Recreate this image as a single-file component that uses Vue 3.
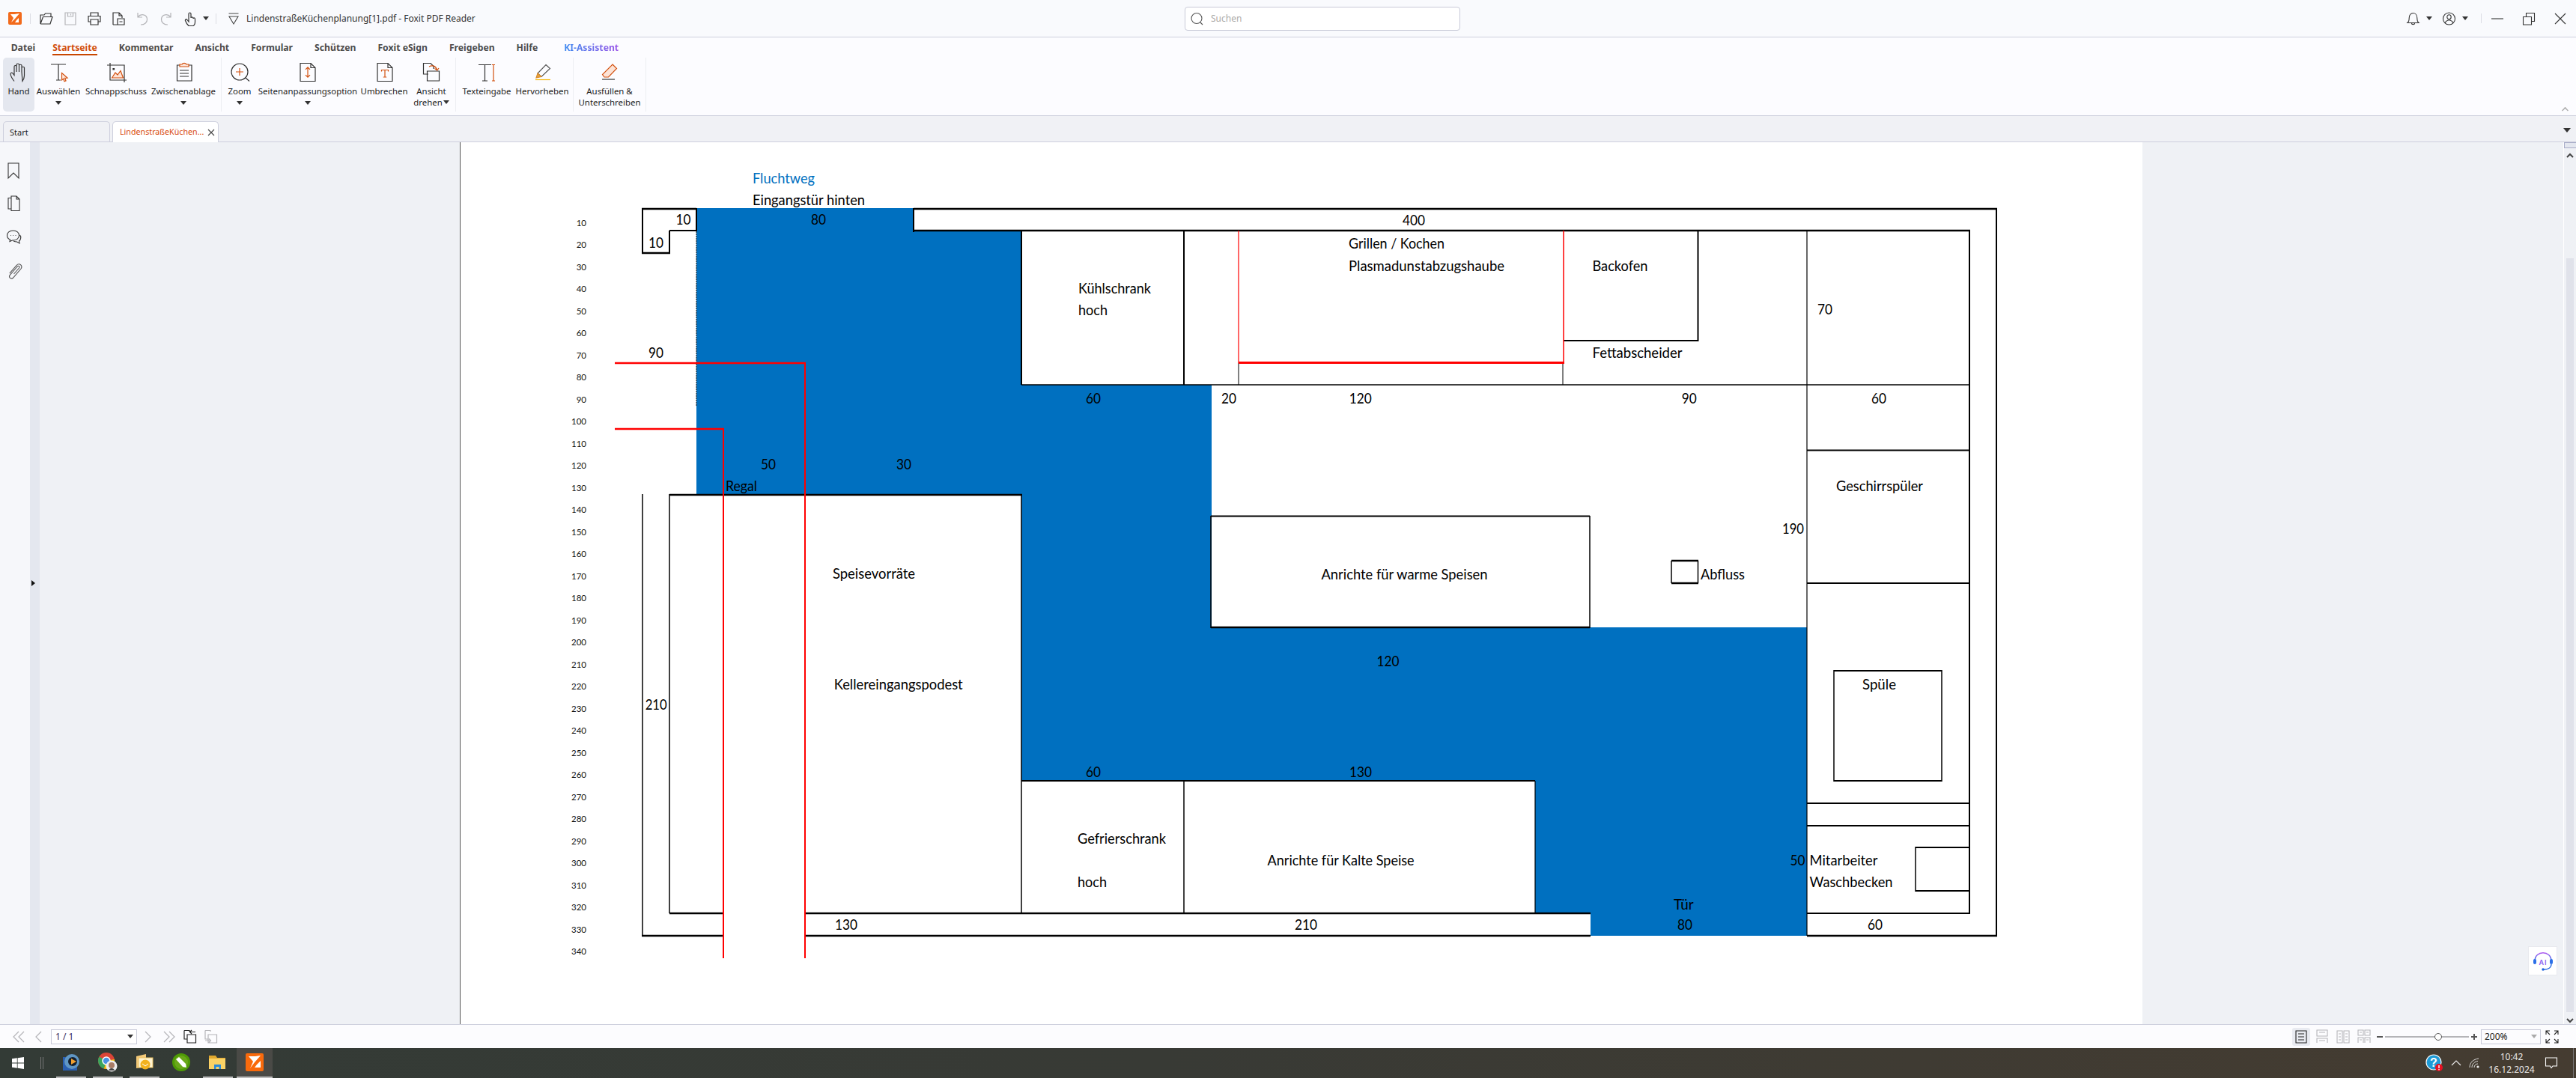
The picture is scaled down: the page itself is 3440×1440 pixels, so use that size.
<script setup>
const OR = '#d2500f'
const DK = '#333'
const GR = '#b4b4b8'
const icons = {
  hand: [['M8 25.5C6 23 3.5 19 3 16C2.8 14 5 13.5 6.5 15.5L8 17.5V6C8 4 11 4 11 6V13M11 13V3.5C11 1.5 14.5 1.5 14.5 3.5V13M14.5 13V4.5C14.5 2.8 18 2.8 18 4.5V13M18 13V7.5C18 5.8 21.5 5.8 21.5 7.5V18C21.5 21.5 20 24 19 25.5Z', DK]],
  select: [['M4 3H24M14 3V24M11 24H17', DK], ['M18.5 14.5L26 21L22.6 21.3L24 25L22 25.8L20.6 22.2L18.5 24Z', OR, '#fde8dd']],
  snap: [['M2 4H25V27M6 1V24H29', DK], ['M8.5 21L13 14L16 17L20 11.5L23.5 21Z', OR, '#fde3d6'], ['M10 8.5h1.5v1.5h-1.5z', DK, DK]],
  clip: [['M9 4H5.5V25H25V4H21M9 11H21M9 15H21M9 19H21', DK], ['M9 6V3H12C13 .8 17 .8 18 3H21V6Z', OR, '#fde3d6']],
  zoom: [['M25 13A11 11 0 1 1 3 13A11 11 0 1 1 25 13M22 21L27 25.5', DK], ['M14 8V18M9 13H19', OR]],
  fit: [['M4 1.5H18L24 7.5V25.5H4ZM18 1.5V7.5H24', DK], ['M14 7V20M11 9.8L14 6.8L17 9.8M11 17.2L14 20.2L17 17.2', OR]],
  wrap: [['M5 1.5H19L25 7.5V25.5H5ZM19 1.5V7.5H25', DK], ['M10.5 12.5V10.5H19.5V12.5M15 10.5V20M12.8 20H17.2', OR]],
  rotate: [['M10 16H3.5V1.5H13L17 5.5V9', DK], ['M8.5 12H24.5V25H8.5Z', DK], ['M11 6C15 3.5 20 5 21.5 10M18.5 8.5L21.8 11L24 8', OR]],
  text: [['M3 3.5H20M11.5 3.5V25M8 25H15', DK], ['M23 3.5V25M21 3.5H25M21 25H25', OR]],
  mark: [['M19 3.5L24.5 8.5L13 19.5L8 15Z', '#555'], ['M8 15L13 19.5L6 21Z', '#d88a2c', '#e8a33a'], ['M5 23.5H25', '#f5b400']],
  fill: [['M18 3L23.5 8.5L12.5 20L7 20L4.5 16.5Z', OR, '#fde3d6'], ['M4 23H21', DK]],
  folder: [['M2 17V5H7L8.5 3H16V7M2 17H15L18 7.5H5.5L2 17', DK]],
  save: [['M3 2H17V18H3ZM6.5 2V7H13.5V2M10.5 3.5V5.5', GR]],
  print: [['M5 6V2H15V6M5 14H2V6.5H18V14H15M5 11H15V18H5Z', DK]],
  docs: [['M3 18V2H11L15 6V9M11 2V6H15M3 18H9M9 10H18V18H9ZM11.5 14H15.5', DK]],
  undo: [['M4 2V8H10M4.3 7.5C8 3 16 4 16.5 10.5C16.8 15 13 18 8 18', GR]],
  redo: [['M16 2V8H10M15.7 7.5C12 3 4 4 3.5 10.5C3.2 15 7 18 12 18', GR]],
  touch: [['M8 9V3.5C8 1.5 11 1.5 11 3.5V9M11 9C11 7.5 14 7.5 14 9.5M14 10C14 8.5 16.5 8.5 16.5 10.5V14C16.5 17 15 19 14 19.5H8C6.5 18 4 14 3.5 12.5C3 11 5 10 6 11.5L8 14V9', DK]],
  custom: [['M3.5 3H16.5M4 7H16L10 17Z', '#444']],
  search: [['M16 9.5A7 7 0 1 1 2 9.5A7 7 0 1 1 16 9.5M14 15L17 18', '#555']],
  bell: [['M2 15.5C4 14 4.2 12 4.2 9C4.2 5 6.5 2.5 9.5 2.5C12.5 2.5 14.8 5 14.8 9C14.8 12 15 14 17 15.5ZM7.5 15.8C7.5 18.4 11.5 18.4 11.5 15.8', DK]],
  user: [['M17.5 10A8 8 0 1 1 1.5 10A8 8 0 1 1 17.5 10M12.2 7.8A2.7 3 0 1 1 6.8 7.8A2.7 3 0 1 1 12.2 7.8M4.2 15.5C5 13 7 12.5 8.5 12H10.5C12 12.5 14 13 14.8 15.5', DK]],
  min: [['M2 10H18', DK]],
  restore: [['M2.5 7.5H13.5V18H2.5ZM6.5 7.5V2.5H17.5V13.5H13.5', DK]],
  close: [['M3 3L17 17M17 3L3 17', DK]],
  bookmark: [['M3 2H17V22L10 15L3 22Z', '#333']],
  pages: [['M7 18H3V3.5H7M7 1H14L18 5V20.5H7ZM14 1V5H18', '#333']],
  comment: [['M9.5 2C4.5 2 1.5 5 1.5 8.5C1.5 11 3 13 5.5 14L5 16.5L8.5 15C14 15.3 17.5 12.5 17.5 8.5C17.5 5 14.5 2 9.5 2ZM18.5 8C20.5 10 20 14.5 17.5 16L18 19L14.5 17C13 17 11.5 16.7 10 16', '#333'], ['M6 8.5h.8M9.3 8.5h.8M12.6 8.5h.8', '#333']],
  attach: [['M10.5 15L17.5 7C19 5.2 16.8 3.2 15.2 5L5.5 16.2C2.8 19.5 7 23 9.8 19.8L20 8C23.2 4 17.6 -.4 14.2 3.4L4.8 14.2', '#555']],
  first: [['M11 3L4 10L11 17M18 3L11 10L18 17', GR]],
  prev: [['M13 3L6 10L13 17', GR]],
  next: [['M7 3L14 10L7 17', GR]],
  last: [['M2 3L9 10L2 17M9 3L16 10L9 17', GR]],
  pgA: [['M2 1.5H9V3M2 1.5V13H6M6 7H17.5V18H6ZM10 3.5H17M12 1L9.5 3.5L12 6', '#222']],
  pgB: [['M2 1.5H9V3M2 1.5V13H6M6 7H17.5V18H6ZM2 15H9M7 17.5L9.5 15L7 12.5', GR]],
  vA: [['M3 2H17V18H3ZM6 6H14M6 10H14M6 14H14', '#222']],
  vB: [['M3 1H17V9H3ZM6 4H14M3 18V12H17V18M6 15H14', GR]],
  vC: [['M2 2H9V18H2ZM11 2H18V18H11ZM4 6H7M4 10H7M4 14H7M13 6H16M13 10H16M13 14H16', GR]],
  vD: [['M2 1H9V8H2ZM11 1H18V8H11ZM2 18V11H9V18M11 18V11H18V18M4 4H7M13 4H16M4 14H7M13 14H16', GR]],
  full: [['M2 7V2H7M2 2L7 7M13 2H18V7M18 2L13 7M2 13V18H7M2 18L7 13M18 13V18H13M18 18L13 13', '#222']]
}
const menu = ['Datei', 'Startseite', 'Kommentar', 'Ansicht', 'Formular', 'Schützen', 'Foxit eSign', 'Freigeben', 'Hilfe']
const groups = [
  { items: [
    { i: 'hand', l: ['Hand'], w: 42, on: true },
    { i: 'select', l: ['Auswählen'], w: 64, c: true },
    { i: 'snap', l: ['Schnappschuss'], w: 90 },
    { i: 'clip', l: ['Zwischenablage'], w: 90, c: true }
  ] },
  { items: [
    { i: 'zoom', l: ['Zoom'], w: 48, c: true },
    { i: 'fit', l: ['Seitenanpassungsoption'], w: 134, c: true },
    { i: 'wrap', l: ['Umbrechen'], w: 70 },
    { i: 'rotate', l: ['Ansicht', 'drehen'], w: 56, ci: true }
  ] },
  { items: [
    { i: 'text', l: ['Texteingabe'], w: 82 },
    { i: 'mark', l: ['Hervorheben'], w: 66 }
  ] },
  { items: [{ i: 'fill', l: ['Ausfüllen &', 'Unterschreiben'], w: 96 }] }
]
const L = (a, b, c, d, w = 2) => ({ a, b, c, d, w })
const blackLines = [
  L(857, 279, 930, 279, 2.5), L(1220, 279, 2667, 279, 2.5), L(858, 278, 858, 339), L(857, 338, 895, 338, 2.5),
  L(894, 308, 894, 339), L(894, 308, 931, 308), L(930, 278, 930, 309), L(1220, 278, 1220, 310),
  L(1220, 308, 2631, 308, 2.5), L(2666, 278, 2666, 1251), L(2630, 308, 2630, 1220),
  L(1364, 308, 1364, 514), L(1581, 308, 1581, 514), L(1364, 514, 2630, 514, 1.6),
  L(1654, 485, 1654, 514, 1), L(2087, 485, 2087, 514, 1), L(2088, 455, 2268, 455), L(2267.5, 308, 2267.5, 456),
  L(2413, 308, 2413, 1250, 1.2), L(2413, 601.5, 2630, 601.5), L(2413, 779, 2630, 779),
  L(2413, 1073, 2631, 1073), L(2413, 1103, 2631, 1103), L(2558, 1132, 2631, 1132), L(2558, 1190, 2631, 1190), L(2558, 1131, 2558, 1191, 1.5),
  L(2413, 1220, 2631, 1220), L(2449, 896, 2593, 896), L(2449, 1043, 2593, 1043), L(2449, 895, 2449, 1044, 1.5), L(2593, 895, 2593, 1044, 1.5),
  L(858, 660, 858, 1250, 1.5), L(894, 660, 894, 1220, 1.5), L(894, 661, 1365, 661, 2.5),
  L(857, 1250, 966, 1250, 2.5), L(1075, 1250, 2124, 1250, 2.5), L(2413, 1250, 2667, 1250, 2.5),
  L(894, 1220, 966, 1220, 2.5), L(1075, 1220, 2124, 1220, 2.5),
  L(1364, 660, 1364, 1220, 1.5), L(1581, 1043, 1581, 1220, 1.5), L(1364, 1043, 2050, 1043, 2), L(2050, 1043, 2050, 1220, 1.2),
  L(1617, 689.5, 2123, 689.5), L(1617, 838, 2123, 838, 2.5), L(1617, 689, 1617, 839, 1.5), L(2123, 689, 2123, 839, 1.5),
  L(2232, 749, 2268, 749, 2.5), L(2232, 779, 2268, 779, 2.5), L(2232, 749, 2232, 779, 1.5), L(2267.5, 749, 2267.5, 779, 1.5)
]
const redLines = [
  L(821, 485, 1076, 485, 2.5), L(1075, 485, 1075, 1280), L(821, 573, 967, 573, 2.5), L(966, 573, 966, 1280),
  L(1654, 308, 1654, 485, 1.2), L(2088, 308, 2088, 485, 1.5), L(1654, 484.5, 2089, 484.5, 3)
]
const T = (x, y, t, w, c) => ({ x, y: y - 1, t, w, c })
const labels = [
  T(1005, 238, 'Fluchtweg', 83, '#0070c0'), T(1005, 267, 'Eingangstür hinten', 150),
  T(902.5, 293, '10', 20), T(1083, 293, '80', 20), T(866, 324, '10', 20),
  T(1440, 385, 'Kühlschrank', 97), T(1440, 414, 'hoch', 39), T(866, 471, '90', 20),
  T(1450, 532, '60', 20), T(1631, 532, '20', 20), T(1016, 620, '50', 20), T(1197, 620, '30', 20), T(969, 649, 'Regal', 42),
  T(1873, 294, '400', 30), T(1801, 325, 'Grillen / Kochen', 128), T(1801, 355, 'Plasmadunstabzugshaube', 208),
  T(2126.5, 355, 'Backofen', 74), T(2126.5, 471.5, 'Fettabscheider', 120), T(2427, 413.5, '70', 20),
  T(1801.7, 532, '120', 30), T(2245.7, 532, '90', 20), T(2499, 532, '60', 20), T(2452, 649, 'Geschirrspüler', 116),
  T(2380, 706, '190', 29), T(1764.5, 767, 'Anrichte für warme Speisen', 222), T(2271, 767, 'Abfluss', 59),
  T(1112, 766, 'Speisevorräte', 110), T(1113.7, 914, 'Kellereingangspodest', 172), T(861.7, 941, '210', 29),
  T(1450, 1031, '60', 20), T(1439, 1120, 'Gefrierschrank', 118), T(1439, 1178, 'hoch', 39), T(1115, 1235, '130', 30),
  T(1838.5, 883.7, '120', 30), T(2487, 914, 'Spüle', 45), T(1802, 1031, '130', 30), T(1692.6, 1149, 'Anrichte für Kalte Speise', 196),
  T(2390.6, 1149, '50', 20), T(2416.5, 1149, 'Mitarbeiter', 91), T(2416.5, 1178, 'Waschbecken', 111),
  T(2235, 1208, 'Tür', 26.5), T(1729, 1235, '210', 30), T(2240, 1235, '80', 20), T(2494, 1235, '60', 20)
]
const ruler = Array.from({ length: 34 }, (_, i) => ({ n: (i + 1) * 10, y: 297 + 29.5 * i }))
const taskItems = [
  { k: 'media', on: true }, { k: 'chrome', on: true }, { k: 'mail', on: true },
  { k: 'pen', on: false }, { k: 'files', on: true }, { k: 'foxit', on: true, active: true }
]
</script>

<template>
  <div class="app">
    <header class="titlebar">
      <div class="tb-left">
        <span class="logo-slot">
          <svg width="18" height="17" viewBox="0 0 18 17"><rect width="18" height="17" rx="2" fill="#f26a1b"/><path d="M3 3H8L15 2L9 9L4 14L7 8ZM11 11L14 8V14H9Z" fill="#fff"/></svg>
        </span>
        <span class="vsep"></span>
        <span v-for="q in ['folder','save','print','docs','undo','redo','touch']" :key="q" class="qa">
          <svg width="20" height="20" viewBox="0 0 20 20"><path v-for="(p,i) in icons[q]" :key="i" :d="p[0]" :stroke="p[1]" :fill="p[2]||'none'" stroke-width="1.2"/></svg>
        </span>
        <span class="caret qa-caret"></span>
        <span class="vsep sep2"></span>
        <span class="qa custom">
          <svg width="20" height="20" viewBox="0 0 20 20"><path v-for="(p,i) in icons.custom" :key="i" :d="p[0]" :stroke="p[1]" fill="none" stroke-width="1.1"/></svg>
        </span>
        <span class="doc-title">LindenstraßeKüchenplanung[1].pdf - Foxit PDF Reader</span>
      </div>
      <div class="search">
        <svg width="20" height="20" viewBox="0 0 20 20"><path :d="icons.search[0][0]" stroke="#555" fill="none" stroke-width="1.1"/></svg>
        <span>Suchen</span>
      </div>
      <div class="tb-right">
        <svg class="tr-icon" width="20" height="20" viewBox="0 0 20 20"><path :d="icons.bell[0][0]" stroke="#333" fill="none" stroke-width="1.1"/></svg>
        <span class="caret tr-caret c1"></span>
        <svg class="tr-icon user" width="20" height="20" viewBox="0 0 20 20"><path :d="icons.user[0][0]" stroke="#333" fill="none" stroke-width="1.1"/></svg>
        <span class="caret tr-caret c2"></span>
        <span class="vsep sep3"></span>
        <span v-for="q in ['min','restore','close']" :key="q" class="win">
          <svg width="20" height="20" viewBox="0 0 20 20"><path :d="icons[q][0][0]" stroke="#333" fill="none" stroke-width="1.1"/></svg>
        </span>
      </div>
    </header>

    <section class="ribbon">
      <nav class="menu">
        <span v-for="m in menu" :key="m" class="menu-item" :class="{ current: m === 'Startseite', first: m === 'Datei' }">{{ m }}</span>
        <span class="menu-item ai">KI-Assistent</span>
      </nav>
      <div class="tools">
        <div v-for="(g, gi) in groups" :key="gi" class="group" :class="'g' + gi">
          <div v-for="it in g.items" :key="it.i" class="tool" :class="{ on: it.on }" :style="{ width: it.w + 'px' }">
            <svg width="28" height="28" viewBox="0 0 28 28">
              <path v-for="(p,i) in icons[it.i]" :key="i" :d="p[0]" :stroke="p[1]" :fill="p[2]||'none'" stroke-width="1.2"/>
            </svg>
            <span v-for="(t, ti) in it.l" :key="t" class="tool-label">{{ t }}<i v-if="it.ci && ti === 1" class="caret inline"></i></span>
            <i v-if="it.c" class="caret below"></i>
          </div>
        </div>
        <span class="collapse"></span>
      </div>
    </section>

    <div class="tabs">
      <div class="tab">Start</div>
      <div class="tab active"><span>LindenstraßeKüchen...</span>
        <svg width="10" height="10" viewBox="0 0 10 10"><path d="M1 1L9 9M9 1L1 9" stroke="#444" fill="none" stroke-width="1.1"/></svg>
      </div>
      <i class="caret tabs-caret"></i>
    </div>

    <main class="main">
      <aside class="rail">
        <svg v-for="q in ['bookmark','pages','comment','attach']" :key="q" class="rail-icon" width="24" height="24" viewBox="0 0 24 24">
          <path v-for="(p,i) in icons[q]" :key="i" :d="p[0]" :stroke="p[1]" fill="none" stroke-width="1.1"/>
        </svg>
      </aside>
      <div class="strip"><i class="handle"></i></div>
      <div class="viewer">
        <div class="page">
          <svg class="plan" width="2246" height="1178" viewBox="615 190 2246 1178">
            <polygon points="930,278 1220,278 1220,308 1364,308 1364,514 1618,514 1618,838 2413,838 2413,1250 2124,1250 2124,1220 2050,1220 2050,1043 1364,1043 1364,660 930,660" fill="#0070c0"/>
            <line x1="930" y1="309" x2="930" y2="543" stroke="#111" stroke-width="1" stroke-dasharray="2 1"/>
            <line v-for="(l,i) in blackLines" :key="'b'+i" :x1="l.a" :y1="l.b" :x2="l.c" :y2="l.d" stroke="#000" :stroke-width="l.w"/>
            <line v-for="(l,i) in redLines" :key="'r'+i" :x1="l.a" :y1="l.b" :x2="l.c" :y2="l.d" stroke="#f00" :stroke-width="l.w"/>
            <text v-for="r in ruler" :key="r.n" :x="783" :y="r.y" class="rule" text-anchor="end" dominant-baseline="central">{{ r.n }}</text>
            <text v-for="(t,i) in labels" :key="'t'+i" :x="t.x" :y="t.y" class="lbl" :fill="t.c || '#000'" :textLength="t.w" lengthAdjust="spacingAndGlyphs" dominant-baseline="central">{{ t.t }}</text>
          </svg>
        </div>
        <div class="ai-btn">
          <svg width="28" height="28" viewBox="0 0 28 28">
            <defs><linearGradient id="aig" x1="0" y1="0" x2="0" y2="1"><stop offset="0" stop-color="#b05cf0"/><stop offset="1" stop-color="#1c63e0"/></linearGradient></defs>
            <path d="M3 14C3 -1 25 -1 25 14" stroke="url(#aig)" fill="none" stroke-width="1.4"/>
            <rect x="1" y="11" width="4" height="7" rx="2" fill="#2b6fe8"/><rect x="23" y="11" width="4" height="7" rx="2" fill="#2b6fe8"/>
            <path d="M25 18C25 23 20 25 15 25" stroke="#1c63e0" fill="none" stroke-width="1.3"/><circle cx="14" cy="25" r="1.7" fill="#1c63e0"/>
            <text x="14" y="18.5" text-anchor="middle" class="ai-txt">AI</text>
          </svg>
        </div>
      </div>
      <div class="scroller">
        <span class="sb-top"></span>
        <svg width="14" height="10" viewBox="0 0 14 10"><path d="M3 7L7 3L11 7" stroke="#444" fill="none" stroke-width="2"/></svg>
        <span class="sb-gap"></span>
        <span class="sb-thumb"></span>
        <svg width="14" height="10" viewBox="0 0 14 10"><path d="M3 3L7 7L11 3" stroke="#444" fill="none" stroke-width="2"/></svg>
      </div>
    </main>

    <footer class="status">
      <div class="st-left">
        <svg class="nav" width="20" height="20" viewBox="0 0 20 20"><path :d="icons.first[0][0]" :stroke="GR" fill="none" stroke-width="1.2"/></svg>
        <svg class="nav n2" width="20" height="20" viewBox="0 0 20 20"><path :d="icons.prev[0][0]" :stroke="GR" fill="none" stroke-width="1.2"/></svg>
        <div class="pagebox"><span>1 / 1</span><i class="caret"></i></div>
        <svg class="nav n3" width="20" height="20" viewBox="0 0 20 20"><path :d="icons.next[0][0]" :stroke="GR" fill="none" stroke-width="1.2"/></svg>
        <svg class="nav n4" width="20" height="20" viewBox="0 0 20 20"><path :d="icons.last[0][0]" :stroke="GR" fill="none" stroke-width="1.2"/></svg>
        <svg class="nav n5" width="20" height="20" viewBox="0 0 20 20"><path :d="icons.pgA[0][0]" stroke="#222" fill="none" stroke-width="1.2"/></svg>
        <svg class="nav n6" width="20" height="20" viewBox="0 0 20 20"><path :d="icons.pgB[0][0]" :stroke="GR" fill="none" stroke-width="1.2"/></svg>
      </div>
      <div class="st-right">
        <span class="viewbtn on"><svg width="20" height="20" viewBox="0 0 20 20"><path :d="icons.vA[0][0]" stroke="#222" fill="none" stroke-width="1.1"/></svg></span>
        <span v-for="q in ['vB','vC','vD']" :key="q" class="viewbtn"><svg width="20" height="20" viewBox="0 0 20 20"><path :d="icons[q][0][0]" :stroke="GR" fill="none" stroke-width="1.1"/></svg></span>
        <span class="zoom-minus"></span>
        <span class="slider"><i class="knob"></i></span>
        <span class="zoom-plus"></span>
        <div class="zoombox"><span>200%</span><i class="caret light"></i></div>
        <svg class="fullsc" width="20" height="20" viewBox="0 0 20 20"><path :d="icons.full[0][0]" stroke="#222" fill="none" stroke-width="1.1"/></svg>
      </div>
    </footer>

    <div class="taskbar">
      <span class="win-logo">
        <svg width="16" height="16" viewBox="0 0 16 16"><path d="M0 2.3L6.8 1.3V7.6H0ZM7.6 1.2L16 0V7.6H7.6ZM0 8.4H6.8V14.7L0 13.7ZM7.6 8.4H16V16L7.6 14.8Z" fill="#fff"/></svg>
      </span>
      <span class="grip"></span>
      <span v-for="t in taskItems" :key="t.k" class="task" :class="{ open: t.on, active: t.active }">
        <svg v-if="t.k==='media'" width="24" height="24" viewBox="0 0 24 24"><rect x="1" y="5" width="19" height="18" fill="#2a5fb0"/><circle cx="13" cy="11" r="10" fill="#5f96c4"/><circle cx="14" cy="11" r="6" fill="#14202e"/><path d="M12 7L19 11L12 15Z" fill="#f0a030"/></svg>
        <svg v-else-if="t.k==='chrome'" width="26" height="26" viewBox="0 0 26 26"><circle cx="11" cy="11" r="11" fill="#db4437"/><path d="M11 11L1.5 5.5A11 11 0 0 0 8 21.6Z" fill="#3ba55d"/><path d="M11 11L21.8 9A11 11 0 0 1 8 21.6Z" fill="#f4c20d"/><circle cx="11" cy="11" r="5" fill="#4a90e2" stroke="#fff" stroke-width="1.5"/><circle cx="18" cy="18" r="7.5" fill="#eee"/><circle cx="18" cy="17" r="4" fill="#a87c66"/><path d="M14 24C15 20 21 20 22 24Z" fill="#444"/></svg>
        <svg v-else-if="t.k==='mail'" width="24" height="24" viewBox="0 0 24 24"><path d="M1 4L14 1V18L1 20Z" fill="#f3c978"/><rect x="4" y="6" width="19" height="13" fill="#fff3d0" stroke="#e8c060"/><circle cx="13" cy="15" r="6.5" fill="#f3b21e"/><path d="M9 14L13 17L17 14" stroke="#fff" fill="none"/></svg>
        <svg v-else-if="t.k==='pen'" width="24" height="24" viewBox="0 0 24 24"><circle cx="12" cy="12" r="12" fill="#4e9a06"/><circle cx="12" cy="12" r="9" fill="#6aa81a"/><path d="M5 8L9 5L18 14L19 19L14 18Z" fill="#fff"/></svg>
        <svg v-else-if="t.k==='files'" width="24" height="24" viewBox="0 0 24 24"><path d="M0 3H9L11 6H22V9H0Z" fill="#e0a82e"/><rect y="7" width="22" height="14" fill="#fbd265"/><path d="M7 21V15H16V21H13.5V18H9.5V21Z" fill="#2a8ad8"/></svg>
        <svg v-else width="24" height="24" viewBox="0 0 24 24"><rect width="24" height="24" rx="2" fill="#f96a0c"/><path d="M4 4H13L20 3L12 12L6 20L10 11ZM15 15L20 10V19H12Z" fill="#fff"/></svg>
      </span>
      <span class="tray-space"></span>
      <svg class="tray help" width="24" height="24" viewBox="0 0 24 24"><circle cx="11" cy="11" r="10" fill="#1d9ad6" stroke="#fff" stroke-width="1.2"/><text x="11" y="17" text-anchor="middle" class="q">?</text><circle cx="18" cy="18" r="5" fill="#e81123"/><rect x="17.3" y="15" width="1.4" height="4" fill="#fff"/><rect x="17.3" y="20" width="1.4" height="1.4" fill="#fff"/></svg>
      <svg class="tray chev" width="16" height="16" viewBox="0 0 16 16"><path d="M2 11L8 5L14 11" stroke="#eee" fill="none" stroke-width="1.1"/></svg>
      <svg class="tray wifi" width="16" height="16" viewBox="0 0 16 16"><path d="M1 14C1 7 6 3 13 2M4 14C4 9 8 6 12 5.5M7 14C7 11 9.5 9 12 9" stroke="#ddd" fill="none"/><circle cx="12" cy="13" r="1.6" fill="#eee"/></svg>
      <div class="clock"><span>10:42</span><span>16.12.2024</span></div>
      <svg class="tray note" width="18" height="18" viewBox="0 0 18 18"><path d="M1.5 2H16.5V13H11L9 15.5L7.5 13H1.5Z" stroke="#fff" fill="none" stroke-width="1.1"/></svg>
      <span class="desk"></span>
    </div>
  </div>
</template>

<style scoped>
.app { width: 3440px; height: 1440px; display: flex; flex-direction: column; overflow: hidden; font-family: "Noto Sans", sans-serif; color: #222; background: #fafbfd; font-size: 12px; }
.caret { display: inline-block; width: 0; height: 0; border-left: 4px solid transparent; border-right: 4px solid transparent; border-top: 5px solid #333; }

.titlebar { height: 50px; box-sizing: border-box; border-bottom: 1px solid #cdcfdd; display: flex; align-items: center; background: #f9fafd; flex: none; }
.tb-left { flex: 0 0 1582px; display: flex; align-items: center; }
.logo-slot { width: 40px; padding-left: 11px; box-sizing: border-box; display: flex; }
.vsep { width: 1px; height: 14px; background: #dcdde4; flex: none; }
.qa { width: 32px; display: flex; justify-content: center; flex: none; }
.qa:nth-of-type(3) { margin-left: 5px; }
.qa-caret { margin-left: 1px; }
.sep2 { margin-left: 9px; }
.custom { margin-left: 7px; }
.doc-title { font-size: 12px; margin-left: 1px; color: #333; white-space: nowrap; }
.search { width: 368px; height: 32px; box-sizing: border-box; border: 1px solid #c8cad8; border-radius: 4px; background: #fff; display: flex; align-items: center; padding-left: 6px; gap: 8px; color: #aaa; font-size: 12px; }
.tb-right { flex: 1; display: flex; align-items: center; justify-content: flex-end; }
.tr-icon { margin-right: 7px; }
.tr-caret.c1 { margin-right: 13px; }
.tr-caret.c2 { margin-right: 17px; }
.sep3 { height: 13px; margin-right: 0; }
.win { width: 42px; display: flex; justify-content: center; }

.ribbon { height: 105px; box-sizing: border-box; border-bottom: 1px solid #cdcfdd; background: #fcfcff; flex: none; }
.menu { height: 27px; display: flex; align-items: center; gap: 29px; padding-left: 14.7px; font-size: 12.2px; font-weight: 700; color: #4c4c4c; }
.menu-item { position: relative; white-space: nowrap; }
.menu-item.first { margin-right: -6px; }
.menu-item.current { color: #d2500f; }
.menu-item.current::after { content: ""; position: absolute; left: 0; right: 0; bottom: -2px; height: 2.5px; background: #c84600; }
.menu-item.ai { margin-left: 6px; background: linear-gradient(90deg, #3f8cf0, #9a55e8); -webkit-background-clip: text; background-clip: text; color: transparent; }
.tools { height: 72px; display: flex; position: relative; padding-left: 4px; }
.group { display: flex; border-right: 1px solid #eceef2; height: 72px; box-sizing: border-box; }
.group.g0 { width: 292px; }
.group.g1 { width: 313px; }
.group.g2 { width: 157px; }
.group.g3 { width: 97px; }
.tool { display: flex; flex-direction: column; align-items: center; height: 72px; padding-top: 6px; box-sizing: border-box; border-radius: 5px; line-height: 15px; color: #222; flex: none; }
.tool.on { background: #e4e7ef; }
.tool svg { margin-bottom: 3px; flex: none; }
.tool-label { font-size: 11.4px; white-space: nowrap; }
.caret.below { margin-top: 6px; }
.caret.inline { margin-left: 1px; vertical-align: 2px; }
.collapse { position: absolute; right: 10px; top: 66px; width: 7px; height: 7px; border-left: 2px solid #aaa; border-top: 2px solid #aaa; transform: rotate(45deg) scale(.7); }

.tabs { height: 35px; box-sizing: border-box; border-bottom: 1px solid #cdcfdd; background: #f0f1f5; display: flex; align-items: flex-end; padding-left: 4px; gap: 3px; position: relative; flex: none; }
.tab { width: 143px; height: 27px; box-sizing: border-box; border: 1px solid #cdcfdd; border-bottom: none; border-radius: 5px 5px 0 0; padding-left: 8px; line-height: 27px; font-size: 11px; }
.tab.active { width: 142px; height: 28px; margin-bottom: -1px; background: #fff; color: #d8480a; padding-left: 9px; display: flex; align-items: center; justify-content: space-between; padding-right: 4px; font-size: 10.7px; }
.tabs-caret { position: absolute; right: 7px; top: 16px; border-left-width: 5px; border-right-width: 5px; border-top-width: 6px; }

.main { flex: 1; display: flex; min-height: 0; background: #eff1f5; }
.rail { width: 40px; background: #f6f7fa; display: flex; flex-direction: column; align-items: center; padding-top: 26px; gap: 21px; box-sizing: border-box; flex: none; }
.rail-icon { flex: none; }
.strip { width: 13px; background: #e4e7ef; position: relative; flex: none; }
.handle { position: absolute; left: 2px; top: 585px; border-left: 5px solid #111; border-top: 4px solid transparent; border-bottom: 4px solid transparent; }
.viewer { flex: 1; padding-left: 562px; position: relative; min-width: 0; }
.page { width: 2246px; height: 100%; background: #fff; border-left: 1px solid #555; margin-left: -1px; }
.plan { display: block; }
.rule { font-family: Lato, sans-serif; font-size: 11.5px; fill: #111; }
.lbl { font-family: Lato, sans-serif; font-size: 19.5px; }
.ai-btn { position: absolute; right: 8px; top: 1074px; width: 39px; height: 39px; background: #fff; border: 1px solid #e8e9ee; box-sizing: border-box; display: flex; align-items: center; justify-content: center; }
.ai-txt { font-family: Inter, sans-serif; font-size: 9px; fill: #8a5cf0; font-weight: 600; letter-spacing: 1px; }
.scroller { width: 17px; border-left: 1px solid #fff; box-sizing: border-box; display: flex; flex-direction: column; align-items: center; flex: none; }
.sb-top { width: 17px; height: 8px; background: #e4e7ef; border: 1px solid #a9adc8; box-sizing: border-box; flex: none; margin-bottom: 5px; }
.sb-gap { height: 132px; flex: none; }
.sb-thumb { flex: 1; width: 10px; background: #e0e2ea; margin-bottom: 6px; }

.status { height: 32px; box-sizing: border-box; border-top: 1px solid #cdcfdd; background: #fcfcfe; display: flex; justify-content: space-between; align-items: center; flex: none; }
.st-left { display: flex; align-items: center; padding-left: 14px; }
.nav { flex: none; }
.n2 { margin-left: 8px; }
.n3 { margin-left: 4px; }
.n4 { margin-left: 10px; }
.n5 { margin-left: 7px; }
.n6 { margin-left: 8px; }
.pagebox { width: 115px; height: 20px; box-sizing: border-box; border: 1px solid #c8cad8; display: flex; justify-content: space-between; align-items: center; padding: 0 4px 0 5px; margin-left: 6px; font-size: 12px; color: #3a2a5a; background: #fff; }
.st-right { display: flex; align-items: center; padding-right: 22px; }
.viewbtn { width: 24px; height: 24px; display: flex; align-items: center; justify-content: center; margin-right: 4px; border-radius: 3px; }
.viewbtn.on { background: #e9ebf1; }
.zoom-minus { width: 8px; height: 2px; background: #555; margin-left: 1px; }
.slider { width: 112px; height: 2px; background: #b5b5b8; margin: 0 3px 0 3px; position: relative; }
.knob { position: absolute; left: 66px; top: -4px; width: 8px; height: 8px; border: 1px solid #555; border-radius: 50%; background: #fff; }
.zoom-plus { width: 8px; height: 8px; margin-right: 5px; background: linear-gradient(#555, #555) center/8px 2px no-repeat, linear-gradient(#555, #555) center/2px 8px no-repeat; }
.zoombox { width: 80px; height: 20px; box-sizing: border-box; border: 1px solid #c8cad8; display: flex; justify-content: space-between; align-items: center; padding: 0 4px; font-size: 12px; margin-right: 5px; }
.caret.light { border-top-color: #aaa; }
.fullsc { flex: none; }

.taskbar { height: 40px; background: linear-gradient(90deg, #333b36, #383a35 45%, #453c31); display: flex; align-items: center; color: #eee; flex: none; }
.win-logo { width: 48px; display: flex; justify-content: center; }
.grip { width: 4px; height: 16px; border-left: 1px solid #777; border-right: 1px solid #777; box-sizing: border-box; margin-left: 6px; margin-right: 17px; }
.task { width: 40px; height: 40px; margin-right: 9px; display: flex; align-items: center; justify-content: center; box-sizing: border-box; border-bottom: 2px solid transparent; }
.task.open { border-bottom-color: #bcbcbc; }
.task.active { width: 48px; background: #4a4a46; margin-left: -4px; }
.tray-space { flex: 1; }
.tray { flex: none; }
.help { margin-right: 9px; }
.chev { margin-right: 9px; }
.wifi { margin-right: 11px; }
.q { font-family: "Liberation Sans", sans-serif; font-size: 16px; font-weight: 700; fill: #fff; }
.clock { display: flex; flex-direction: column; align-items: center; width: 60px; font-size: 12px; line-height: 17px; color: #e8e8e8; }
.note { margin-left: 14px; margin-right: 20px; }
.desk { width: 1px; height: 40px; background: #777; margin-right: 3px; }
</style>

<style>
html, body { margin: 0; height: 1440px; overflow: hidden; }
</style>
